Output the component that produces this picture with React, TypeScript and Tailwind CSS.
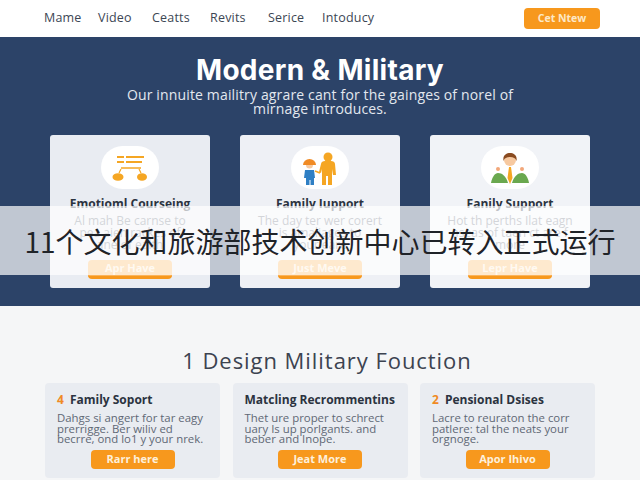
const navItems = [
  { label: 'Mame', width: 'w-[54px]' },
  { label: 'Video', width: 'w-[54px]' },
  { label: 'Ceatts', width: 'w-[58px]' },
  { label: 'Revits', width: 'w-[58px]' },
  { label: 'Serice', width: 'w-[54px]' },
  { label: 'Intoducy', width: 'w-[60px]' },
];

const BookIcon = () => (
  <svg width="36" height="28" viewBox="0 0 36 28" fill="none">
    <path d="M5 3h7M14 3h18" stroke="#f5a623" strokeWidth="2" />
    <path d="M5 8h7M14 8h16" stroke="#f5a623" strokeWidth="2" />
    <path d="M9 14h20" stroke="#f5a623" strokeWidth="1.500" />
    <path d="M9 15l-2 4M27 15l2 4" stroke="#f5a623" strokeWidth="1.200" />
    <ellipse cx="6" cy="23" rx="5.500" ry="3.800" fill="#f5a623" />
    <ellipse cx="30" cy="23" rx="5" ry="3.800" fill="#f5a623" />
  </svg>
);

const FamilyIcon = () => (
  <svg width="36" height="36" viewBox="0 0 36 36" fill="none">
    <circle cx="26" cy="7" r="4.500" fill="#f5a623" />
    <path d="M19 14c0-2 2-3 4-3h6c2 0 4 1 4 3l1 11h-3l-1-6v16h-4v-9h-2v9h-4V19l-1 4-2-1z" fill="#f5a623" />
    <path d="M1 15a6.500 6 0 0 1 13 0z" fill="#f08a24" />
    <path d="M4 15h7a3.500 3.500 0 0 1-7 0z" fill="#f7c9a0" />
    <path d="M3 20h9l1 8h-1v7H8.500v-5h-1v5H4v-7H2z" fill="#2f7fc4" />
    <path d="M13 21l5 2" stroke="#f5a623" strokeWidth="1.500" />
  </svg>
);

const PersonIcon = () => (
  <svg width="38" height="36" viewBox="0 0 38 36" fill="none">
    <path d="M0 33c1-6 4-10 7-10 4 0 8 3 10 10z" fill="#6aa84f" />
    <path d="M21 33c2-7 6-10 10-10 3 0 6 4 7 10z" fill="#6aa84f" />
    <path d="M18 17h2l1.500 11-2.500 6-2.500-6z" fill="#f5a623" />
    <circle cx="19" cy="10" r="6" fill="#f7c9a0" />
    <path d="M12.500 11c-1-6 3-8 6.500-8s7.500 2 6.500 8c-1-3-3-4-6.500-4s-5.500 1-6.500 4z" fill="#8a4b20" />
    <circle cx="7" cy="19" r="2" fill="#f2a77a" />
    <circle cx="31" cy="19" r="2" fill="#f2a77a" />
  </svg>
);

const heroCards = [
  { icon: <BookIcon />, bg: 'bg-[#e9ecf2]', title: 'Emotioml Courseing', lines: ['Al mah Be carnse to', 'pea aien rackes of', 'ane of ealth'], action: 'Apr Have' },
  { icon: <FamilyIcon />, bg: 'bg-[#eef0f5]', title: 'Family Iupport', lines: ['The day ter wer corert', 'is amaliages to', 'your eare'], action: 'Just Meve' },
  { icon: <PersonIcon />, bg: 'bg-[#f1f3f7]', title: 'Fanily Support', lines: ['Hot th perths Ilat eagn', 'aseas of taen ct are f', 'more'], action: 'Lepr Have' },
];

const featureCards = [
  { num: '4', title: 'Family Soport', lines: ['Dahgs si angert for tar eagy', 'prerrigge. Ber wiliv ed', 'becrre, ond lo1 y your nrek.'], action: 'Rarr here' },
  { num: '', title: 'Matcling Recrommentins', lines: ['Thet ure proper to schrect', 'uary Is up porlgants. and', 'beber and Inope.'], action: 'Jeat More' },
  { num: '2', title: 'Pensional Dsises', lines: ['Lacre to reuraton the corr', 'patlere: tal the neats your', 'orgnoge.'], action: 'Apor Ihivo' },
];

export default function App() {
  return (
    <div className="relative h-[480px] w-[640px] overflow-hidden bg-[#f5f6f7] font-['Open_Sans',sans-serif]">
      <nav className="flex h-[37px] items-center justify-between bg-white pl-[44px] pr-[40px] shadow-[0_1px_0_#d5dbe3]">
        <div className="flex text-[12.500px] tracking-[0.2px] text-[#3c4654]">
          {navItems.map((item) => (
            <span key={item.label} className={item.width}>{item.label}</span>
          ))}
        </div>
        <button className="h-[21px] w-[76px] rounded-sm bg-[#f7981d] text-[10.500px] font-bold text-[#fde8c8]">Cet Ntew</button>
      </nav>

      <section className="flex h-[269px] flex-col items-center bg-[#2c4368] pt-[18px]">
        <h1 className="font-['Inter',sans-serif] text-[28px] leading-[30px] font-bold tracking-[0.3px] text-white">Modern &amp; Military</h1>
        <p className="mt-[3px] w-[400px] text-center text-[14px] leading-[14px] tracking-[0.15px] text-[#e3e8ef]">
          Our innuite mailitry agrare cant for the gainges of norel of mirnage introduces.
        </p>
        <div className="mt-[19px] flex gap-[30px]">
          {heroCards.map((card) => (
            <div key={card.title} className={`flex h-[153px] w-[160px] flex-col items-center rounded-[3px] pt-[11px] ${card.bg}`}>
              <div className="flex h-[43px] w-[58px] items-center justify-center rounded-full bg-white">{card.icon}</div>
              <h3 className="mt-[9px] text-[12px] leading-[12px] font-bold text-[#2b3340]">{card.title}</h3>
              <div className="mt-[5px] text-center text-[12px] leading-[12px] text-[#6b7280]">
                {card.lines.map((line) => <p key={line}>{line}</p>)}
              </div>
              <button className="mt-[9px] h-[19px] w-[84px] rounded-sm border-b-[3px] border-[#f7981d] bg-[#fbb45b] text-[11px] leading-[14px] font-bold text-[#fdebd2]">{card.action}</button>
            </div>
          ))}
        </div>
      </section>

      <section className="flex flex-col items-center pt-[41px]">
        <h2 className="ml-[14px] text-[22px] leading-[26px] tracking-[0.95px] text-[#3c4350]">1 Design Military Fouction</h2>
        <div className="mt-[10px] flex gap-[12.500px]">
          {featureCards.map((card) => (
            <div key={card.title} className="flex h-[95px] w-[175px] flex-col rounded-[4px] bg-[#e9ecf1] px-[12px] pt-[10px]">
              <h3 className="text-[12px] leading-[14px] font-bold text-[#2b3340]">
                {card.num && <span className="mr-[6px] text-[#f08a24]">{card.num}</span>}
                {card.title}
              </h3>
              <div className="mt-[6px] text-[11.400px] leading-[10.500px] text-[#5f6875]">
                {card.lines.map((line) => <p key={line}>{line}</p>)}
              </div>
              <button className="mt-[5px] h-[19px] w-[84px] self-center rounded-sm bg-[#f7981d] text-[11px] leading-[14px] font-bold text-[#fdf0dc]">{card.action}</button>
            </div>
          ))}
        </div>
      </section>

      <div className="absolute inset-x-0 top-[206px] flex h-[69px] items-center justify-center bg-white/70 font-['Noto_Sans_CJK_SC',sans-serif] text-[28px] text-[#1f2328]">
        11个文化和旅游部技术创新中心已转入正式运行
      </div>
    </div>
  );
}
